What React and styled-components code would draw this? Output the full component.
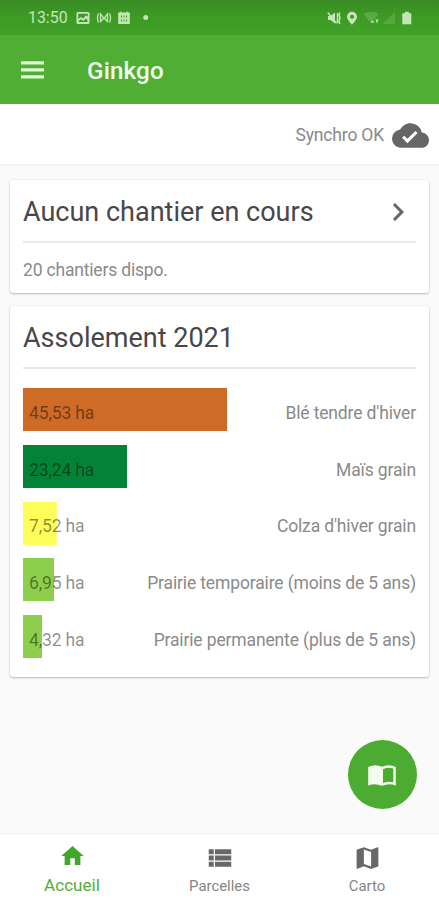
import React from 'react';
import styled, { createGlobalStyle } from 'styled-components';
import {
  MdChevronRight,
  MdCloudDone,
  MdHome,
  MdMap,
  MdViewList,
} from 'react-icons/md';

const GlobalStyle = createGlobalStyle`
  * {
    box-sizing: border-box;
  }
  body {
    margin: 0;
    background: #fafafa;
    font-family: Roboto, 'Liberation Sans', sans-serif;
    color: #8a8a8a;
  }
`;

const Screen = styled.div`
  position: relative;
  display: flex;
  flex-direction: column;
  height: 900px;
  overflow: hidden;
`;

const StatusBar = styled.div`
  display: flex;
  flex: none;
  justify-content: space-between;
  height: 35px;
  padding: 0 26px 0 28px;
  background: linear-gradient(#388b22, #3e9b26 50%, #40a127);
  color: #c3e6b7;
`;

const StatusGroup = styled.div`
  display: flex;
  align-items: center;

  svg {
    display: block;
  }
`;

const Clock = styled.span`
  width: 48px;
  font-size: 15.9px;
  line-height: 35px;
  white-space: nowrap;
`;

const Header = styled.header`
  display: flex;
  flex: none;
  align-items: center;
  height: 69px;
  padding-left: 21px;
  background: #50ae34;
  color: #dff5d6;
`;

const AppName = styled.h1`
  margin: 2px 0 0 43px;
  font-size: 24.2px;
  font-weight: 500;
  letter-spacing: 0.15px;
  color: #f1fbec;
`;

const SyncBar = styled.div`
  display: flex;
  flex: none;
  align-items: center;
  justify-content: flex-end;
  gap: 8px;
  height: 62px;
  padding: 2px 10px 0 0;
  background: #fff;
  border-bottom: 2px solid #f2f2f2;
  font-size: 17.5px;
  letter-spacing: -0.18px;

  svg {
    color: #666;
  }
`;

const Content = styled.main`
  display: flex;
  flex: 1;
  flex-direction: column;
  gap: 13px;
  padding: 14px 10px 0;
`;

const Card = styled.section`
  height: ${props => props.$height}px;
  padding: 0 13px;
  border-radius: 3px;
  background: #fff;
  box-shadow: 0 1px 2px rgba(0, 0, 0, 0.24), 0 0 2px rgba(0, 0, 0, 0.08);
`;

const CardHeader = styled.div`
  display: flex;
  align-items: center;
  justify-content: space-between;
  height: 63px;
  padding-top: 3px;
  border-bottom: 2px solid #e8e8e8;

  svg {
    color: #666;
  }
`;

const CardTitle = styled.h2`
  margin: 0;
  font-size: 27px;
  font-weight: 400;
  line-height: 58px;
  color: #4a4648;
  white-space: nowrap;
`;

const CardText = styled.p`
  margin: 17px 0 0;
  font-size: 17.5px;
  line-height: 20px;
  letter-spacing: -0.18px;
`;

const Crops = styled.div`
  display: grid;
  grid-auto-rows: 43px;
  row-gap: 13.8px;
  padding-top: 19px;
`;

// La barre est dessinée en fond, sa largeur dépend de la surface
const CropRow = styled.div`
  display: flex;
  align-items: center;
  justify-content: space-between;
  padding: 6.5px 0 0 6px;
  background: linear-gradient(${props => props.$color}, ${props => props.$color})
    no-repeat;
  font-size: 17.5px;
  letter-spacing: -0.14px;
  white-space: nowrap;
`;

const Area = styled.span`
  color: rgba(0, 0, 0, 0.46);
`;

const Fab = styled.button`
  position: absolute;
  right: 22.5px;
  bottom: 91px;
  display: flex;
  align-items: center;
  justify-content: center;
  width: 69px;
  height: 69px;
  padding: 3px 0 0;
  border: 0;
  border-radius: 50%;
  background: #4cab31;
`;

const TabBar = styled.nav`
  display: flex;
  flex: none;
  justify-content: center;
  height: 66px;
  background: #fff;
  box-shadow: 0 -1px 1px rgba(0, 0, 0, 0.03);
`;

const Tab = styled.a`
  display: flex;
  flex: 0 0 147.5px;
  flex-direction: column;
  align-items: center;
  padding-top: ${props => (props.$active ? 7 : 9)}px;
  font-size: ${props => (props.$active ? 17.1 : 14.9)}px;
  line-height: 20px;
  color: ${props => (props.$active ? '#55ad3b' : '#858585')};

  svg {
    flex: none;
    height: 30px;
    margin-bottom: ${props => (props.$active ? 4 : 3)}px;
    color: ${props => (props.$active ? '#41a728' : '#686868')};
  }
`;

const crops = [
  { name: "Blé tendre d'hiver", area: 45.53, color: '#ce6b26' },
  { name: 'Maïs grain', area: 23.24, color: '#048336' },
  { name: "Colza d'hiver grain", area: 7.52, color: '#fffd59' },
  { name: 'Prairie temporaire (moins de 5 ans)', area: 6.95, color: '#8dce4c' },
  { name: 'Prairie permanente (plus de 5 ans)', area: 4.32, color: '#8dce4c' },
];

const total = crops.reduce((sum, crop) => sum + crop.area, 0);

const tabs = [
  { label: 'Accueil', icon: MdHome, size: 27, active: true },
  { label: 'Parcelles', icon: MdViewList, size: 30 },
  { label: 'Carto', icon: MdMap, size: 29 },
];

const MenuIcon = () => (
  <svg width="23" height="18" viewBox="0 0 23 18" fill="currentColor">
    <path d="M0 .2h23v3.200H0zM0 7.300h23v3.200H0zM0 14.200h23v3.200H0z" />
  </svg>
);

const NotificationIcons = () => (
  <svg width="74" height="14" viewBox="0 0 74 14" fill="currentColor">
    {/* image */}
    <path
      fillRule="evenodd"
      d="M2 1h10q1.500 0 1.500 1.500v9q0 1.500-1.500 1.500H2Q.5 13 .5 11.500v-9Q.5 1 2 1zM2.200 2.700v5.200l2.800-2 2.300 1.700 2.300-3 2.200 1V2.700zM2.500 11h9V9L9.800 7.500 7.500 10 5 8.200 2.500 10z"
    />
    {/* antenne */}
    <g fill="none" stroke="currentColor" strokeWidth="1.300">
      <path d="M22.500 2.500q-2 4.500 0 9M33.500 2.500q2 4.500 0 9M24.500 11.500V3l3.500 4.500L31.500 3v8.500M25 10l3-3 3 3" />
    </g>
    {/* agenda */}
    <path
      fillRule="evenodd"
      d="M42.200 1.500H44V.8h1.500v.7h5V.8H52v.7h1.800V13H42.200zM45 4.500v2h1v-2zm2.500 0v2h1v-2zm2.500 0v2h1v-2zM45 8.500v2h1v-2zm2.500 0v2h1v-2zm2.500 0v2h1v-2z"
    />
    <circle cx="69.700" cy="6.500" r="2.500" />
  </svg>
);

const SystemIcons = () => (
  <svg width="86" height="14" viewBox="0 0 86 14" fill="currentColor">
    {/* vibreur */}
    <path d="M1 5h2.500L8 1.500v11L3.500 9H1z" />
    <path
      d="M.8 1.500l8.500 10.500M10.500 2v10.500M12.800 1.500l-.8 2.500 1 3-1 3 .8 3"
      fill="none"
      stroke="currentColor"
      strokeWidth="1.400"
    />
    {/* position */}
    <path
      fillRule="evenodd"
      d="M25 .8a5 5 0 0 1 5 5c0 3-5 8-5 8s-5-5-5-8a5 5 0 0 1 5-5zm0 2.900a2.100 2.100 0 1 0 0 4.200 2.100 2.100 0 0 0 0-4.200z"
    />
    {/* wifi */}
    <path opacity=".22" d="M36.500 3q7.500-4.500 15 0l-7.500 9z" />
    <path d="M45.500 9.200l2.200 2.200h-4.400zM48.500 8.500h3l-1.500 4z" />
    {/* réseau */}
    <path opacity=".18" d="M68 1v12H55.500z" />
    {/* batterie */}
    <path d="M77.800.8h4v1.400H84.300V13.300h-9V2.200h2.500z" />
  </svg>
);

const BookIcon = () => (
  <svg width="30" height="24" viewBox="0 0 30 24">
    <path
      d="M1.200 3Q8-.5 15 2.800q7-3.300 13.800.2v18.500q-7-2.800-13.800.3-7-3.100-13.800-.3z"
      fill="#f4fcf0"
    />
    <path d="M16 5.200q5-2.500 10.300-.8v13.800q-5.300-1.400-10.300.9z" fill="#4cab31" />
  </svg>
);

const formatArea = area => `${area.toFixed(2).replace('.', ',')} ha`;

const App = () => {
  return (
    <>
      <GlobalStyle />
      <Screen>
        <StatusBar>
          <StatusGroup>
            <Clock>13:50</Clock>
            <NotificationIcons />
          </StatusGroup>
          <StatusGroup>
            <SystemIcons />
          </StatusGroup>
        </StatusBar>
        <Header>
          <MenuIcon />
          <AppName>Ginkgo</AppName>
        </Header>
        <SyncBar>
          Synchro OK
          <MdCloudDone size={37} />
        </SyncBar>
        <Content>
          <Card $height={113}>
            <CardHeader>
              <CardTitle>Aucun chantier en cours</CardTitle>
              <MdChevronRight size={36} />
            </CardHeader>
            <CardText>20 chantiers dispo.</CardText>
          </Card>
          <Card $height={371}>
            <CardHeader>
              <CardTitle>Assolement 2021</CardTitle>
            </CardHeader>
            <Crops>
              {crops.map(crop => (
                <CropRow
                  key={crop.name}
                  $color={crop.color}
                  style={{ backgroundSize: `${(crop.area / total) * 100}% 100%` }}
                >
                  <Area>{formatArea(crop.area)}</Area>
                  <span>{crop.name}</span>
                </CropRow>
              ))}
            </Crops>
          </Card>
        </Content>
        <TabBar>
          {tabs.map(({ label, icon: Icon, size, active }) => (
            <Tab key={label} $active={active}>
              <Icon size={size} />
              {label}
            </Tab>
          ))}
        </TabBar>
        <Fab aria-label="Carnet">
          <BookIcon />
        </Fab>
      </Screen>
    </>
  );
};

export default App;
